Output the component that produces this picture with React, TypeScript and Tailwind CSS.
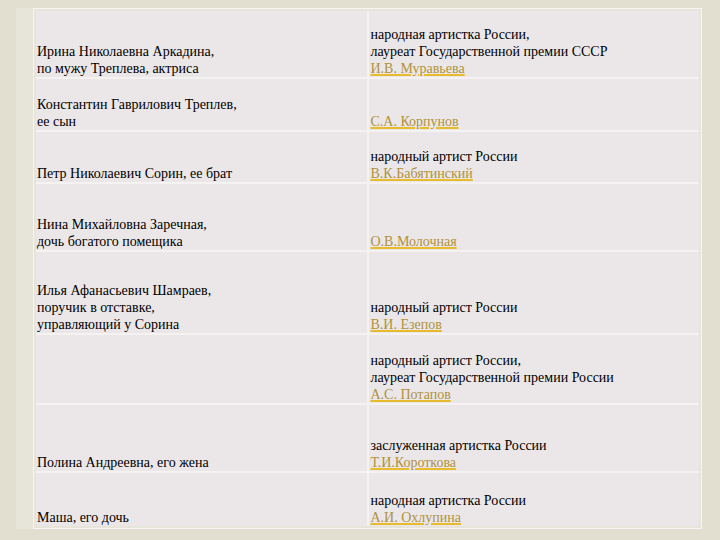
const rows: { left: string[]; right: string[]; link: string; h: number }[] = [
  {
    left: ["Ирина Николаевна Аркадина,", "по мужу Треплева, актриса"],
    right: ["народная артистка России,", "лауреат Государственной премии СССР"],
    link: "И.В. Муравьева",
    h: 66,
  },
  { left: ["Константин Гаврилович Треплев,", "ее сын"], right: [], link: "С.А. Корпунов", h: 51 },
  { left: ["Петр Николаевич Сорин, ее брат"], right: ["народный артист России"], link: "В.К.Бабятинский", h: 50 },
  { left: ["Нина Михайловна Заречная,", "дочь богатого помещика"], right: [], link: "О.В.Молочная", h: 66 },
  {
    left: ["Илья Афанасьевич Шамраев,", "поручик в отставке,", "управляющий у Сорина"],
    right: ["народный артист России"],
    link: "В.И. Езепов",
    h: 81,
  },
  {
    left: [],
    right: ["народный артист России,", "лауреат Государственной премии России"],
    link: "А.С. Потапов",
    h: 68,
  },
  { left: ["Полина Андреевна, его жена"], right: ["заслуженная артистка России"], link: "Т.И.Короткова", h: 66 },
  { left: ["Маша, его дочь"], right: ["народная артистка России"], link: "А.И. Охлупина", h: 53 },
];

export default function App() {
  return (
    <div className="w-[720px] h-[540px] bg-[#e2dfd0] pt-[8px] pl-[16px] font-['Liberation_Serif',serif] text-[14px] leading-[17px] text-black">
      <div className="flex w-[686px] bg-[#e7e5da]">
        <div className="w-[17px]" />
        <div className="w-[669px] border border-[#f7f5f2] p-[2px]">
          <div className="grid grid-cols-2 gap-[2px] bg-[#f5f3f1]">
            {rows.map((r, i) => [
              <div
                key={"l" + i}
                className="flex flex-col justify-end bg-[#ebe7e8] pl-[1px]"
                style={{ height: r.h }}
              >
                {r.left.map((t) => (
                  <div key={t}>{t}</div>
                ))}
              </div>,
              <div
                key={"r" + i}
                className="flex flex-col justify-end bg-[#ebe7e8] pl-[2px]"
                style={{ height: r.h }}
              >
                {r.right.map((t) => (
                  <div key={t}>{t}</div>
                ))}
                <div>
                  <a className="text-[#b0923c] underline decoration-[#e8bb2c] decoration-2 underline-offset-1">
                    {r.link}
                  </a>
                </div>
              </div>,
            ])}
          </div>
        </div>
      </div>
    </div>
  );
}
